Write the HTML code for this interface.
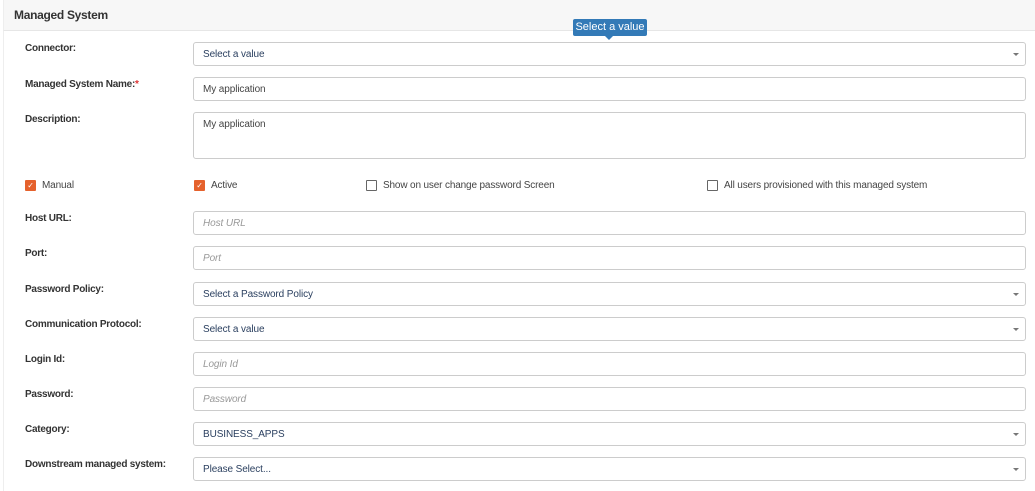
<!DOCTYPE html>
<html><head><style>
body{margin:0;width:1035px;height:488px;background:#fff;font-family:"Liberation Sans",sans-serif;overflow:hidden;position:relative}
.hdr{position:absolute;left:3px;top:0;width:1032px;height:30px;background:#f7f7f7;border-bottom:1px solid #e6e6e6;border-left:1px solid #eee}
.hdr span{position:absolute;left:10px;top:8px;font-size:12px;font-weight:bold;color:#333;letter-spacing:-0.3px}
.side{position:absolute;left:3px;top:31px;width:1px;height:460px;background:#eee}
.lab{position:absolute;left:25px;font-size:10px;font-weight:bold;color:#333;letter-spacing:-0.25px}
.in{position:absolute;left:193px;width:831px;height:22px;border:1px solid #ccc;border-radius:3px;font-size:10px;box-sizing:content-box;letter-spacing:-0.1px}
.in span{position:absolute;left:9px;top:6px}
.sel span{color:#2a3f5f}
.txt span{color:#444}
.ph span{color:#999;font-style:italic}
.arr{position:absolute;right:6px;top:10px;border-left:3px solid transparent;border-right:3px solid transparent;border-top:3px solid #777}
.cb{position:absolute;top:179px;height:12px;font-size:10px;color:#444;letter-spacing:-0.15px;display:inline-flex;align-items:center;white-space:nowrap}
.cb i{display:block;width:9px;height:9px;border:1px solid #666;border-radius:1px;margin-right:6px;flex:none}
.cb i.on{background:#e5612c;border-color:#e5612c;color:#fff;font-style:normal;font-size:8px;line-height:9px;text-align:center;overflow:hidden}
.tip{position:absolute;left:573px;top:19px;width:74px;height:17px;background:#337ab7;color:#fff;font-size:11px;text-align:center;line-height:17px;border-radius:2px}
.tip:after{content:"";position:absolute;left:32px;top:17px;border-left:4px solid transparent;border-right:4px solid transparent;border-top:4px solid #337ab7}
</style></head><body>
<div class="hdr"><span>Managed System</span></div>
<div class="side"></div>
<div class="lab" style="top:43px">Connector:</div>
<div class="in sel" style="top:42px"><span>Select a value</span><div class="arr"></div></div>
<div class="lab" style="top:79px">Managed System Name:<span style="color:#d33">*</span></div>
<div class="in txt" style="top:77px"><span>My application</span></div>
<div class="lab" style="top:114px">Description:</div>
<div class="in txt" style="top:112px;height:45px"><span>My application</span></div>
<div class="cb" style="left:25px"><i class="on">✓</i>Manual</div>
<div class="cb" style="left:194px"><i class="on">✓</i>Active</div>
<div class="cb" style="left:366px"><i></i>Show on user change password Screen</div>
<div class="cb" style="left:707px"><i></i>All users provisioned with this managed system</div>
<div class="lab" style="top:213px">Host URL:</div>
<div class="in ph" style="top:211px"><span>Host URL</span></div>
<div class="lab" style="top:248px">Port:</div>
<div class="in ph" style="top:246px"><span>Port</span></div>
<div class="lab" style="top:284px">Password Policy:</div>
<div class="in sel" style="top:282px"><span>Select a Password Policy</span><div class="arr"></div></div>
<div class="lab" style="top:319px">Communication Protocol:</div>
<div class="in sel" style="top:317px"><span>Select a value</span><div class="arr"></div></div>
<div class="lab" style="top:354px">Login Id:</div>
<div class="in ph" style="top:352px"><span>Login Id</span></div>
<div class="lab" style="top:389px">Password:</div>
<div class="in ph" style="top:387px"><span>Password</span></div>
<div class="lab" style="top:424px">Category:</div>
<div class="in sel" style="top:422px"><span>BUSINESS_APPS</span><div class="arr"></div></div>
<div class="lab" style="top:459px">Downstream managed system:</div>
<div class="in sel" style="top:457px"><span>Please Select...</span><div class="arr"></div></div>
<div class="tip">Select a value</div>
</body></html>
